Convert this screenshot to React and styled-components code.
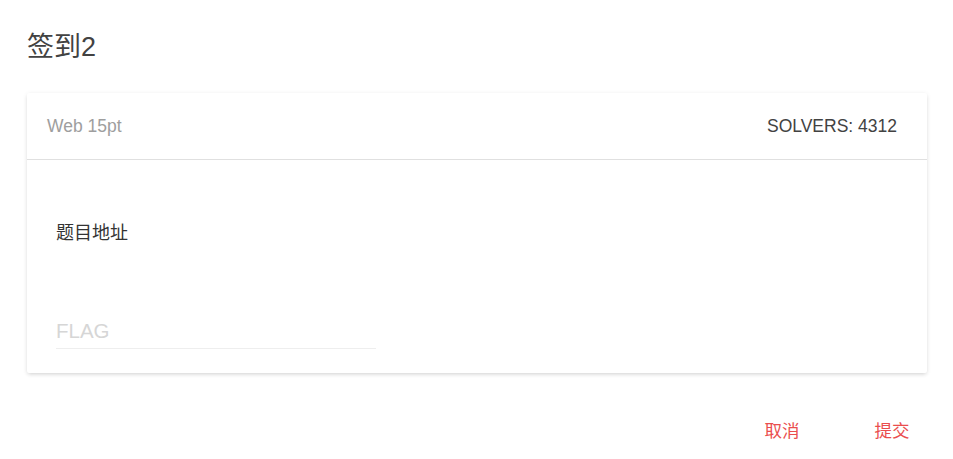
import React from "react"
import styled, { createGlobalStyle } from "styled-components"

const Global = createGlobalStyle`
  html, body {
    margin: 0;
    padding: 0;
    background: #fff;
    font-family: "Liberation Sans", Arial, "Noto Sans CJK SC", sans-serif;
  }
`

const Dialog = styled.div`
  width: 953px;
  height: 459px;
  box-sizing: border-box;
  padding: 29px 26px 0 27px;
  display: flex;
  flex-direction: column;
`

const Title = styled.h1`
  margin: 0;
  font-size: 27px;
  line-height: 36px;
  font-weight: 400;
  color: #424242;
`

const Card = styled.section`
  margin-top: 28px;
  background: #fff;
  box-shadow: 0 2px 4px -1px rgba(0, 0, 0, 0.12), 0 1px 5px 0 rgba(0, 0, 0, 0.08);
  border-radius: 2px;
`

const CardHeader = styled.div`
  height: 67px;
  box-sizing: border-box;
  display: flex;
  align-items: center;
  justify-content: space-between;
  padding: 0 30px 0 20px;
  border-bottom: 1px solid #e0e0e0;
  font-size: 17.5px;
`

const Category = styled.span`
  color: #9e9e9e;
`

const Solvers = styled.span`
  color: #424242;
`

const CardBody = styled.div`
  padding: 61px 29px 24px 29px;
`

const Link = styled.div`
  font-size: 18px;
  line-height: 24px;
  color: #333;
`

const Field = styled.div`
  margin-top: 68px;
  width: 320px;
  border-bottom: 1px solid #eeeeee;
`

const Input = styled.input`
  display: block;
  width: 100%;
  box-sizing: border-box;
  border: none;
  outline: none;
  padding: 0;
  height: 35px;
  font-size: 20.5px;
  font-family: inherit;
  color: #333;
  background: transparent;

  &::placeholder {
    color: #d6d6d6;
  }
`

const Actions = styled.div`
  display: flex;
  justify-content: flex-end;
  gap: 10px;
  margin-top: 38px;
  margin-right: -15px;
`

const TextButton = styled.button`
  border: none;
  background: none;
  min-width: 100px;
  height: 36px;
  padding: 0;
  font-family: inherit;
  font-size: 17.5px;
  color: ${({ $color }) => $color || "#ea4e4e"};
  cursor: pointer;
`

export default function App() {
  return (
    <>
      <Global />
      <Dialog>
        <Title>签到2</Title>
        <Card>
          <CardHeader>
            <Category>Web 15pt</Category>
            <Solvers>SOLVERS: 4312</Solvers>
          </CardHeader>
          <CardBody>
            <Link>题目地址</Link>
            <Field>
              <Input placeholder="FLAG" />
            </Field>
          </CardBody>
        </Card>
        <Actions>
          <TextButton>取消</TextButton>
          <TextButton>提交</TextButton>
        </Actions>
      </Dialog>
    </>
  )
}
